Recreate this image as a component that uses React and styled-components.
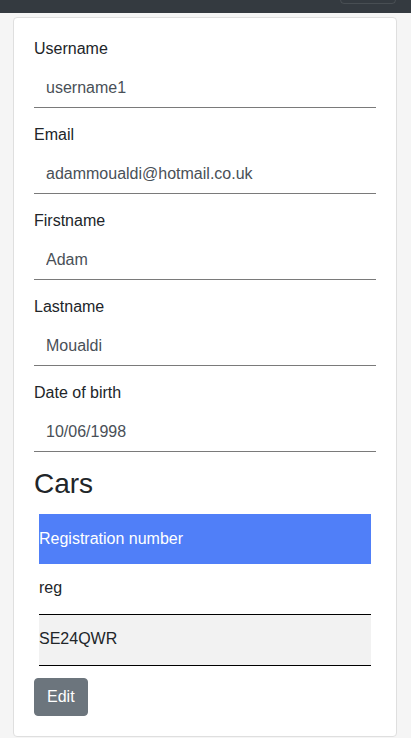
import React from "react";
import styled, { createGlobalStyle } from "styled-components";

const Global = createGlobalStyle`
  html, body { margin: 0; padding: 0; background: #f5f5f5; }
  body { font-family: "Liberation Sans", Arial, sans-serif; color: #212529; font-size: 16px; line-height: 1.5; }
  * { box-sizing: border-box; }
`;

const NavBar = styled.nav`
  height: 13px;
  background: #343a40;
  display: flex;
  justify-content: flex-end;
  align-items: flex-end;
  padding-right: 15px;
  overflow: hidden;
`;

const Toggler = styled.div`
  width: 56px;
  height: 40px;
  margin-bottom: 9px;
  border: 1px solid rgba(255, 255, 255, 0.1);
  border-radius: 4px;
`;

const Card = styled.main`
  margin: 4px 14px 0 13px;
  background: #fff;
  border: 1px solid #dfdfdf;
  border-radius: 4px;
  padding: 19px 20px 20px;
`;

const Field = styled.div`
  margin-bottom: 15px;
`;

const Label = styled.label`
  display: block;
  font-size: 16px;
  line-height: 24px;
  margin-bottom: 7px;
  color: #212529;
`;

const Input = styled.input`
  display: block;
  width: 100%;
  height: 40px;
  border: none;
  border-bottom: 1px solid #7a7a7a;
  padding: 0 12px;
  font-family: "Liberation Sans", Arial, sans-serif;
  font-size: 16px;
  color: #495057;
  background: transparent;
  outline: none;
`;

const Heading = styled.h3`
  font-size: 28px;
  font-weight: 400;
  line-height: 1.2;
  margin: 4px 0 13px;
  color: #212529;
`;

const Table = styled.table`
  width: calc(100% - 10px);
  margin: 0 5px;
  border-collapse: collapse;
`;

const HeadCell = styled.th`
  background: #507ff8;
  color: #fff;
  font-weight: 400;
  text-align: left;
  height: 50px;
  padding: 0;
  font-size: 16px;
`;

const Row = styled.tr`
  background: ${(p) => (p.$striped ? "#f2f2f2" : "#fff")};
  border-bottom: 1px solid #000;
`;

const Cell = styled.td`
  height: 51px;
  padding: 0 0 2px;
  font-size: 16px;
  color: #212529;
`;

const Button = styled.button`
  margin-top: 12px;
  background: #6c757d;
  color: #fff;
  border: 1px solid #6c757d;
  border-radius: 4px;
  padding: 6px 12px;
  font-family: "Liberation Sans", Arial, sans-serif;
  font-size: 16px;
  line-height: 24px;
`;

const fields = [
  ["Username", "username1"],
  ["Email", "adammoualdi@hotmail.co.uk"],
  ["Firstname", "Adam"],
  ["Lastname", "Moualdi"],
  ["Date of birth", "10/06/1998"],
];

export default function App() {
  return (
    <>
      <Global />
      <NavBar>
        <Toggler />
      </NavBar>
      <Card>
        {fields.map(([label, value]) => (
          <Field key={label}>
            <Label>{label}</Label>
            <Input defaultValue={value} readOnly />
          </Field>
        ))}
        <Heading>Cars</Heading>
        <Table>
          <thead>
            <tr>
              <HeadCell>Registration number</HeadCell>
            </tr>
          </thead>
          <tbody>
            <Row>
              <Cell>reg</Cell>
            </Row>
            <Row $striped>
              <Cell>SE24QWR</Cell>
            </Row>
          </tbody>
        </Table>
        <Button>Edit</Button>
      </Card>
    </>
  );
}
